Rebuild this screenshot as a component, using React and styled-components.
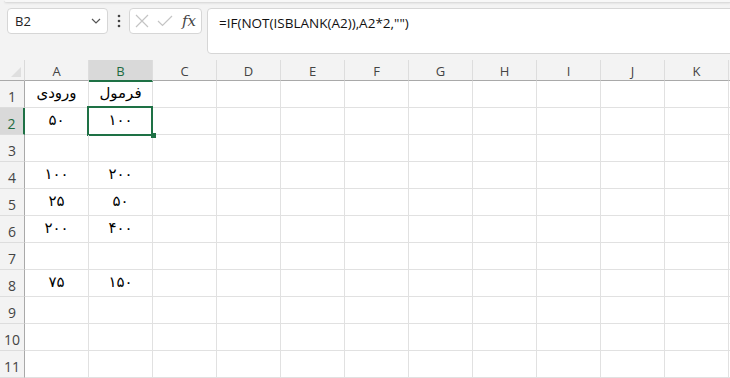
import React from 'react';
import styled, { createGlobalStyle, css } from 'styled-components';

const GlobalStyle = createGlobalStyle`
  html, body {
    margin: 0;
    padding: 0;
    background: #f3f3f3;
  }
  body {
    font-family: 'Open Sans', 'Noto Sans', sans-serif;
  }
`;

const Page = styled.div`
  width: 730px;
  height: 378px;
  overflow: hidden;
  display: flex;
  flex-direction: column;
  background: #f3f3f3;
`;

const RibbonEdge = styled.div`
  height: 3px;
  margin: 0 0 0 4px;
  background: #f7f7f7;
  border-bottom: 1px solid #dcdcdc;
  border-bottom-left-radius: 5px;
  box-shadow: 0 1px 2px rgba(0, 0, 0, 0.06);
`;

const FormulaRow = styled.div`
  display: flex;
  align-items: flex-start;
  padding: 5px 0 0 7px;
  height: 46px;
`;

const Box = styled.div`
  box-sizing: border-box;
  background: #fff;
  border: 1px solid #d6d6d6;
  border-radius: 4px;
  display: flex;
  align-items: center;
`;

const NameBox = styled(Box)`
  width: 101px;
  height: 26px;
  padding: 0 6px 0 7px;
  justify-content: space-between;
  font-size: 13px;
  color: #222;
`;

const Dots = styled.div`
  width: 21px;
  height: 26px;
  display: flex;
  align-items: center;
  justify-content: center;
`;

const ButtonGroup = styled(Box)`
  width: 73px;
  height: 26px;
  padding: 0 4px 0 5px;
  justify-content: space-between;
`;

const FxLabel = styled.span`
  font-family: 'DejaVu Serif', 'Liberation Serif', serif;
  font-style: italic;
  font-size: 15px;
  color: #444;
  margin-right: 1px;
  line-height: 1;
`;

const FormulaBox = styled(Box)`
  flex: 1;
  height: 46px;
  margin-left: 5px;
  margin-right: -4px;
  padding: 5px 11px;
  align-items: flex-start;
  font-size: 13.5px;
  color: #111;
  white-space: pre;
`;

const Grid = styled.div`
  margin-top: 6px;
  display: grid;
  grid-template-columns: 25px repeat(11, 64px) 1fr;
  grid-template-rows: 21px repeat(11, 27px);
  background: #fff;
`;

const Corner = styled.div`
  background: #f3f3f3;
  border-right: 1px solid #dadada;
  border-bottom: 1px solid #a9a9a9;
  position: relative;
  &::after {
    content: '';
    position: absolute;
    right: 3px;
    bottom: 3px;
    width: 0;
    height: 0;
    border-left: 10px solid transparent;
    border-bottom: 10px solid #dfdfdf;
  }
`;

const ColHead = styled.div`
  background: ${(p) => (p.$active ? '#d9d9d9' : '#f3f3f3')};
  border-right: 1px solid #dddddd;
  border-bottom: ${(p) => (p.$active ? '2px solid #1e7145' : '1px solid #a9a9a9')};
  margin-bottom: ${(p) => (p.$active ? '-1px' : '0')};
  display: flex;
  align-items: center;
  justify-content: center;
  font-size: 13px;
  color: ${(p) => (p.$active ? '#1e6b41' : '#444')};
  padding-top: 1px;
  box-sizing: border-box;
  z-index: ${(p) => (p.$active ? 1 : 0)};
`;

const RowHead = styled.div`
  background: ${(p) => (p.$active ? '#d9d9d9' : '#f3f3f3')};
  border-right: ${(p) => (p.$active ? '2px solid #1e7145' : '1px solid #a9a9a9')};
  border-bottom: 1px solid #dddddd;
  display: flex;
  align-items: flex-end;
  justify-content: center;
  padding-bottom: 1px;
  font-size: 14px;
  color: ${(p) => (p.$active ? '#1e6b41' : '#444')};
  box-sizing: border-box;
`;

const Cell = styled.div`
  position: relative;
  border-right: 1px solid #e1e1e1;
  border-bottom: 1px solid #e1e1e1;
  box-sizing: border-box;
  display: flex;
  align-items: center;
  justify-content: center;
  font-family: 'DejaVu Sans', sans-serif;
  font-size: 15px;
  font-weight: 400;
  color: #000;
  direction: rtl;
  padding-bottom: 2px;
  ${(p) =>
    p.$selected &&
    css`
      &::before {
        content: '';
        position: absolute;
        left: -2px;
        top: -2px;
        width: 66px;
        height: 30px;
        box-sizing: border-box;
        border: 2px solid #1e7145;
      }
      &::after {
        content: '';
        position: absolute;
        right: -4px;
        bottom: -4px;
        width: 5px;
        height: 5px;
        background: #1e7145;
        z-index: 2;
      }
    `}
`;

const Filler = styled.div`
  border-bottom: 1px solid #e1e1e1;
  background: ${(p) => (p.$head ? '#f3f3f3' : '#fff')};
  ${(p) => p.$head && 'border-bottom-color: #a9a9a9;'}
`;

const columns = ['A', 'B', 'C', 'D', 'E', 'F', 'G', 'H', 'I', 'J', 'K'];

const data = {
  1: ['ورودی', 'فرمول'],
  2: ['۵۰', '۱۰۰'],
  4: ['۱۰۰', '۲۰۰'],
  5: ['۲۵', '۵۰'],
  6: ['۲۰۰', '۴۰۰'],
  8: ['۷۵', '۱۵۰'],
};

const Chevron = () => (
  <svg width="10" height="6" viewBox="0 0 10 6">
    <path d="M1 1 L5 5 L9 1" fill="none" stroke="#555" strokeWidth="1.2" />
  </svg>
);

const VDots = () => (
  <svg width="4" height="14" viewBox="0 0 4 14">
    <circle cx="2" cy="2" r="1.3" fill="#444" />
    <circle cx="2" cy="7" r="1.3" fill="#444" />
    <circle cx="2" cy="12" r="1.3" fill="#444" />
  </svg>
);

const CancelIcon = () => (
  <svg width="14" height="14" viewBox="0 0 14 14">
    <path d="M1 1 L13 13 M13 1 L1 13" stroke="#c4c4c4" strokeWidth="1.2" fill="none" />
  </svg>
);

const CheckIcon = () => (
  <svg width="16" height="12" viewBox="0 0 16 12">
    <path d="M1 6 L5.5 10.5 L15 1" stroke="#c4c4c4" strokeWidth="1.2" fill="none" />
  </svg>
);

export default function App() {
  const rows = Array.from({ length: 11 }, (_, i) => i + 1);
  return (
    <Page>
      <GlobalStyle />
      <RibbonEdge />
      <FormulaRow>
        <NameBox>
          <span>B2</span>
          <Chevron />
        </NameBox>
        <Dots>
          <VDots />
        </Dots>
        <ButtonGroup>
          <CancelIcon />
          <CheckIcon />
          <FxLabel>fx</FxLabel>
        </ButtonGroup>
        <FormulaBox>=IF(NOT(ISBLANK(A2)),A2*2,"")</FormulaBox>
      </FormulaRow>
      <Grid>
        <Corner />
        {columns.map((c) => (
          <ColHead key={c} $active={c === 'B'}>
            {c}
          </ColHead>
        ))}
        <Filler $head />
        {rows.map((r) => (
          <React.Fragment key={r}>
            <RowHead $active={r === 2}>{r}</RowHead>
            {columns.map((c, ci) => (
              <Cell key={c} $selected={r === 2 && c === 'B'}>
                {data[r] && ci < 2 ? data[r][ci] : ''}
              </Cell>
            ))}
            <Filler />
          </React.Fragment>
        ))}
      </Grid>
    </Page>
  );
}
